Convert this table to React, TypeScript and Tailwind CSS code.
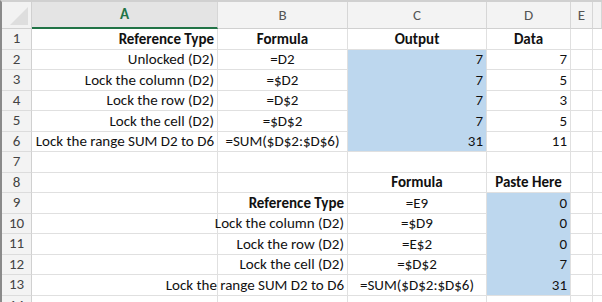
import React from "react";

type Cell = { t?: string; b?: boolean; al?: "l" | "c" | "r"; blue?: boolean };

const rows: Cell[][] = [
  [{ t: "Reference Type", b: true, al: "r" }, { t: "Formula", b: true, al: "c" }, { t: "Output", b: true, al: "c" }, { t: "Data", b: true, al: "c" }],
  [{ t: "Unlocked (D2)", al: "r" }, { t: "=D2", al: "c" }, { t: "7", al: "r", blue: true }, { t: "7", al: "r" }],
  [{ t: "Lock the column (D2)", al: "r" }, { t: "=$D2", al: "c" }, { t: "7", al: "r", blue: true }, { t: "5", al: "r" }],
  [{ t: "Lock the row (D2)", al: "r" }, { t: "=D$2", al: "c" }, { t: "7", al: "r", blue: true }, { t: "3", al: "r" }],
  [{ t: "Lock the cell (D2)", al: "r" }, { t: "=$D$2", al: "c" }, { t: "7", al: "r", blue: true }, { t: "5", al: "r" }],
  [{ t: "Lock the range SUM D2 to D6", al: "r" }, { t: "=SUM($D$2:$D$6)", al: "c" }, { t: "31", al: "r", blue: true }, { t: "11", al: "r" }],
  [{}, {}, {}, {}],
  [{}, {}, { t: "Formula", b: true, al: "c" }, { t: "Paste Here", b: true, al: "c" }],
  [{}, { t: "Reference Type", b: true, al: "r" }, { t: "=E9", al: "c" }, { t: "0", al: "r", blue: true }],
  [{}, { t: "Lock the column (D2)", al: "r" }, { t: "=$D9", al: "c" }, { t: "0", al: "r", blue: true }],
  [{}, { t: "Lock the row (D2)", al: "r" }, { t: "=E$2", al: "c" }, { t: "0", al: "r", blue: true }],
  [{}, { t: "Lock the cell (D2)", al: "r" }, { t: "=$D$2", al: "c" }, { t: "7", al: "r", blue: true }],
  [{}, { t: "Lock the range SUM D2 to D6", al: "r" }, { t: "=SUM($D$2:$D$6)", al: "c" }, { t: "31", al: "r", blue: true }],
  [{}, {}, {}, {}],
];

const font = { fontFamily: "Carlito, Lato, 'Liberation Sans', sans-serif" };

function DataCell({ c, nextBlue }: { c: Cell; nextBlue: boolean }) {
  const just = c.al === "r" ? "justify-end" : c.al === "c" ? "justify-center" : "justify-start";
  const bg = c.blue ? "bg-[#bdd7ee]" : "bg-white";
  const bb = c.blue && nextBlue ? "border-b-[#bdd7ee]" : "border-b-[#e0e0e0]";
  return (
    <div className={`flex items-end ${just} ${bg} border-r border-r-[#e0e0e0] border-b ${bb} px-[3px] pb-[0px] overflow-visible whitespace-nowrap text-[15px] leading-[19px] text-[#111] ${c.b ? "font-bold" : ""}`}>
      {c.t}
    </div>
  );
}

export default function App() {
  const cols = ["A", "B", "C", "D", "E", ""];
  return (
    <div className="w-[602px] h-[302px] overflow-hidden bg-white border-t-2 border-t-[#d0d0d0] border-l-2 border-l-[#8a8a8a]" style={font}>
      <div className="grid grid-cols-[30px_186px_130px_139px_84px_22px_9px] grid-rows-[27px_repeat(14,20.5px)]">
        <div className="relative bg-[#f2f2f2] border-r border-r-[#d0d0d0] border-b border-b-[#d0d0d0]">
          <div className="absolute right-[3px] bottom-[3px] w-0 h-0 border-l-[18px] border-l-transparent border-b-[18px] border-b-[#dedede]" />
        </div>
        {cols.map((h, i) => (
          <div
            key={i}
            className={`flex items-center justify-center text-[15px] border-r border-r-[#d6d6d6] ${
              i === 0
                ? "bg-[#e4e4e4] text-[#217346] font-bold border-b-2 border-b-[#217346]"
                : "bg-[#f3f3f3] text-[#555] border-b border-b-[#d0d0d0]"
            }`}
          >
            {h}
          </div>
        ))}
        {rows.map((r, ri) => (
          <React.Fragment key={ri}>
            <div className="flex items-center justify-center bg-[#f3f3f3] border-r border-r-[#d0d0d0] border-b border-b-[#dcdcdc] text-[15px] leading-[19px] text-[#444]">
              {ri + 1}
            </div>
            {r.map((c, ci) => (
              <DataCell key={ci} c={c} nextBlue={!!rows[ri + 1]?.[ci]?.blue} />
            ))}
            <div className="bg-white border-r border-r-[#e0e0e0] border-b border-b-[#e0e0e0]" />
            <div className="bg-white border-b border-b-[#e0e0e0]" />
          </React.Fragment>
        ))}
      </div>
    </div>
  );
}
